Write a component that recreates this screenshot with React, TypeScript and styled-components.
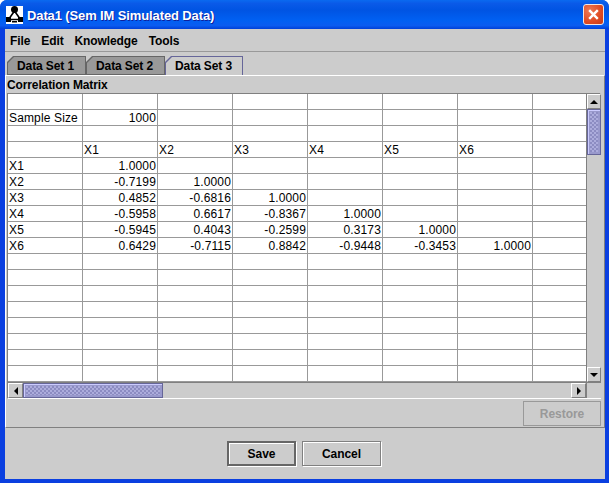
import React from 'react';
import styled, { createGlobalStyle } from 'styled-components';

const GlobalStyle = createGlobalStyle`
    html, body {
        margin: 0;
        background: #ffffff;
    }
    body {
        font-family: "Liberation Sans", Arial, sans-serif;
        font-size: 12px;
        color: #000000;
    }
`;

const Frame = styled.div`
    box-sizing: border-box;
    width: 609px;
    height: 483px;
    display: flex;
    flex-direction: column;
    border-radius: 7px 7px 0 0;
    background: #0a3fe0;
    overflow: hidden;
`;

const TitleBar = styled.div`
    flex: 0 0 29px;
    display: flex;
    align-items: center;
    gap: 4px;
    padding: 0 5px 0 6px;
    background: linear-gradient(180deg, #0a6af0 0, #0a5ae8 12%, #0054e3 35%, #0060f2 70%, #0a5cf0 88%, #0040d8 100%);
`;

const TitleText = styled.span`
    flex: 1;
    padding-top: 2px;
    color: #ffffff;
    font-size: 13px;
    font-weight: bold;
    letter-spacing: -0.12px;
    text-shadow: 1px 1px 0 #0f1f9c;
    white-space: nowrap;
`;

const CloseButton = styled.div`
    box-sizing: border-box;
    width: 21px;
    height: 21px;
    display: flex;
    align-items: center;
    justify-content: center;
    border: 1px solid #f4e6e0;
    border-radius: 3px;
    background: radial-gradient(circle at 30% 30%, #ef7a55, #df4a22 60%, #c43a18);
`;

const Body = styled.div`
    flex: 1;
    display: flex;
    flex-direction: column;
    min-height: 0;
    margin: 0 4px 4px 5px;
    background: #cccccc;
`;

const MenuBar = styled.div`
    box-sizing: border-box;
    flex: 0 0 23px;
    display: flex;
    align-items: center;
    gap: 11px;
    padding: 2px 5px 0;
    border-bottom: 1px solid #999999;
    font-weight: bold;
    letter-spacing: -0.1px;
`;

const TabStrip = styled.div`
    display: flex;
    align-items: flex-end;
    height: 23px;
    padding-left: 2px;
`;

const Tab = styled.div<{ $active?: boolean }>`
    position: relative;
    box-sizing: border-box;
    width: ${(p) => (p.$active ? 78 : 79)}px;
    height: 19px;
    display: flex;
    align-items: center;
    padding-left: 10px;
    font-weight: bold;
    letter-spacing: -0.1px;
    background: ${(p) => (p.$active ? '#666699' : '#666666')};
    clip-path: polygon(6px 0, 100% 0, 100% 100%, 0 100%, 0 6px);

    &::before {
        content: '';
        position: absolute;
        inset: 1px 1px ${(p) => (p.$active ? 0 : '1px')} 1px;
        background: ${(p) => (p.$active ? '#cccccc' : '#999999')};
        clip-path: polygon(6px 0, 100% 0, 100% 100%, 0 100%, 0 6px);
    }
`;

const TabLabel = styled.span`
    position: relative;
`;

const TabPanel = styled.div`
    box-sizing: border-box;
    height: 353px;
    display: flex;
    flex-direction: column;
    padding: 0 3px 0 1px;
    border-top: 1px solid #ffffff;
    border-left: 1px solid #ffffff;
    border-right: 1px solid #808080;
    border-bottom: 1px solid #808080;
`;

const PanelTitle = styled.div`
    height: 17px;
    line-height: 18px;
    font-weight: bold;
    letter-spacing: -0.12px;
    white-space: nowrap;
`;

const ScrollPane = styled.div`
    box-sizing: border-box;
    width: 594px;
    height: 306px;
    display: grid;
    grid-template-columns: 578px 15px;
    grid-template-rows: 288px 16px;
    border-top: 1px solid #808080;
    border-left: 1px solid #808080;
    border-right: 1px solid #ffffff;
    border-bottom: 1px solid #ffffff;
`;

const Viewport = styled.div`
    overflow: hidden;
    background: #ffffff;
`;

const Sheet = styled.table`
    table-layout: fixed;
    width: 600px;
    border-collapse: separate;
    border-spacing: 0;
    font-size: 12px;
`;

const Cell = styled.td<{ $right?: boolean }>`
    box-sizing: border-box;
    width: 75px;
    height: 16px;
    padding: 1px 1px 0;
    border-right: 1px solid #999999;
    border-bottom: 1px solid #999999;
    text-align: ${(p) => (p.$right ? 'right' : 'left')};
    line-height: 14px;
    letter-spacing: 0.14px;
    white-space: nowrap;
    overflow: hidden;
`;

const VerticalBar = styled.div`
    display: flex;
    flex-direction: column;
    border-left: 1px solid #808080;
`;

const HorizontalBar = styled.div`
    display: flex;
    border-top: 1px solid #808080;
`;

const ArrowButton = styled.div`
    box-sizing: border-box;
    flex: 0 0 15px;
    display: flex;
    align-items: center;
    justify-content: center;
    background: #cccccc;
    border-top: 1px solid #ffffff;
    border-left: 1px solid #ffffff;
    border-right: 1px solid #808080;
    border-bottom: 1px solid #808080;
`;

const Track = styled.div`
    flex: 1;
    background: #cccccc;
`;

const Thumb = styled.div<{ $length: number }>`
    box-sizing: border-box;
    flex: 0 0 ${(p) => p.$length}px;
    padding: 2px;
    border: 1px solid #666699;
    box-shadow: inset 1px 1px 0 #ccccff;
    background:
        repeating-conic-gradient(#8c8cc2 0 25%, #acacdc 0 50%) 0 0 / 4px 4px content-box,
        #9999cc padding-box;
`;

const Corner = styled.div`
    background: #cccccc;
    border-top: 1px solid #808080;
    border-left: 1px solid #808080;
`;

const RestoreRow = styled.div`
    display: flex;
    justify-content: flex-end;
    padding: 2px 0 0;
    width: 594px;
`;

const Button = styled.div<{ $kind?: 'default' | 'disabled'; $width: number }>`
    box-sizing: border-box;
    width: ${(p) => p.$width}px;
    height: 25px;
    display: flex;
    align-items: center;
    justify-content: center;
    padding-top: 1px;
    font-weight: bold;
    letter-spacing: -0.05px;
    color: ${(p) => (p.$kind === 'disabled' ? '#999999' : '#000000')};
    border: ${(p) => {
        if (p.$kind === 'default') return '2px solid #666666';
        if (p.$kind === 'disabled') return '1px solid #999999';
        return '1px solid #808080';
    }};
    box-shadow: ${(p) => (p.$kind === 'disabled' ? 'none' : '1px 1px 0 #ffffff, inset 1px 1px 0 #ffffff')};
`;

const Footer = styled.div`
    flex: 1;
    display: flex;
    justify-content: center;
    align-items: flex-start;
    gap: 6px;
    padding: 13px 2px 0 0;
`;

type TCell = { text: string; right?: boolean };

const L = (text: string): TCell => ({ text });
const R = (text: string): TCell => ({ text, right: true });

const matrix: string[][] = [
    ['X1', '1.0000'],
    ['X2', '-0.7199', '1.0000'],
    ['X3', '0.4852', '-0.6816', '1.0000'],
    ['X4', '-0.5958', '0.6617', '-0.8367', '1.0000'],
    ['X5', '-0.5945', '0.4043', '-0.2599', '0.3173', '1.0000'],
    ['X6', '0.6429', '-0.7115', '0.8842', '-0.9448', '-0.3453', '1.0000'],
];

const rows: TCell[][] = [
    [],
    [L('Sample Size'), R('1000')],
    [],
    [L(''), L('X1'), L('X2'), L('X3'), L('X4'), L('X5'), L('X6')],
    ...matrix.map((row) => row.map((text, i) => (i === 0 ? L(text) : R(text)))),
    ...Array.from({ length: 8 }, () => [] as TCell[]),
];

const Arrow = ({ dir }: { dir: 'up' | 'down' | 'left' | 'right' }) => {
    const points = {
        up: '0,4 8,4 4,0',
        down: '0,0 8,0 4,4',
        left: '4,0 4,8 0,4',
        right: '0,0 0,8 4,4',
    }[dir];
    const wide = dir === 'up' || dir === 'down';
    return (
        <svg width={wide ? 8 : 4} height={wide ? 4 : 8} viewBox={wide ? '0 0 8 4' : '0 0 4 8'}>
            <polygon points={points} fill="#000000" />
        </svg>
    );
};

const AppIcon = () => (
    <svg width="17" height="18" viewBox="0 0 17 18">
        <rect width="17" height="18" fill="#ffffff" />
        <circle cx="8.5" cy="3.5" r="3.5" fill="#000000" />
        <path d="M8.5 5 L2.5 13.5 H14.5 Z" fill="none" stroke="#000000" strokeWidth="1.6" />
        <rect x="0" y="11" width="5" height="5" fill="#000000" />
        <rect x="12" y="11" width="5" height="5" fill="#000000" />
        <rect x="6" y="15" width="5" height="1.5" fill="#000000" />
    </svg>
);

const CloseIcon = () => (
    <svg width="11" height="11" viewBox="0 0 11 11">
        <path d="M1.2 1.2 L9.8 9.8 M9.8 1.2 L1.2 9.8" stroke="#ffffff" strokeWidth="2.4" />
    </svg>
);

const App = () => (
    <>
        <GlobalStyle />
        <Frame>
            <TitleBar>
                <AppIcon />
                <TitleText>Data1 (Sem IM Simulated Data)</TitleText>
                <CloseButton>
                    <CloseIcon />
                </CloseButton>
            </TitleBar>
            <Body>
                <MenuBar>
                    <span>File</span>
                    <span>Edit</span>
                    <span>Knowledge</span>
                    <span>Tools</span>
                </MenuBar>
                <TabStrip>
                    <Tab><TabLabel>Data Set 1</TabLabel></Tab>
                    <Tab><TabLabel>Data Set 2</TabLabel></Tab>
                    <Tab $active><TabLabel>Data Set 3</TabLabel></Tab>
                </TabStrip>
                <TabPanel>
                    <PanelTitle>Correlation Matrix</PanelTitle>
                    <ScrollPane>
                        <Viewport>
                            <Sheet>
                                <tbody>
                                    {rows.map((row, r) => (
                                        <tr key={r}>
                                            {Array.from({ length: 8 }, (_, c) => (
                                                <Cell key={c} $right={row[c]?.right}>
                                                    {row[c]?.text}
                                                </Cell>
                                            ))}
                                        </tr>
                                    ))}
                                </tbody>
                            </Sheet>
                        </Viewport>
                        <VerticalBar>
                            <ArrowButton><Arrow dir="up" /></ArrowButton>
                            <Thumb $length={46} />
                            <Track />
                            <ArrowButton><Arrow dir="down" /></ArrowButton>
                        </VerticalBar>
                        <HorizontalBar>
                            <ArrowButton><Arrow dir="left" /></ArrowButton>
                            <Thumb $length={140} />
                            <Track />
                            <ArrowButton><Arrow dir="right" /></ArrowButton>
                        </HorizontalBar>
                        <Corner />
                    </ScrollPane>
                    <RestoreRow>
                        <Button $kind="disabled" $width={78}>Restore</Button>
                    </RestoreRow>
                </TabPanel>
                <Footer>
                    <Button $kind="default" $width={69}>Save</Button>
                    <Button $width={79}>Cancel</Button>
                </Footer>
            </Body>
        </Frame>
    </>
);

export default App;
